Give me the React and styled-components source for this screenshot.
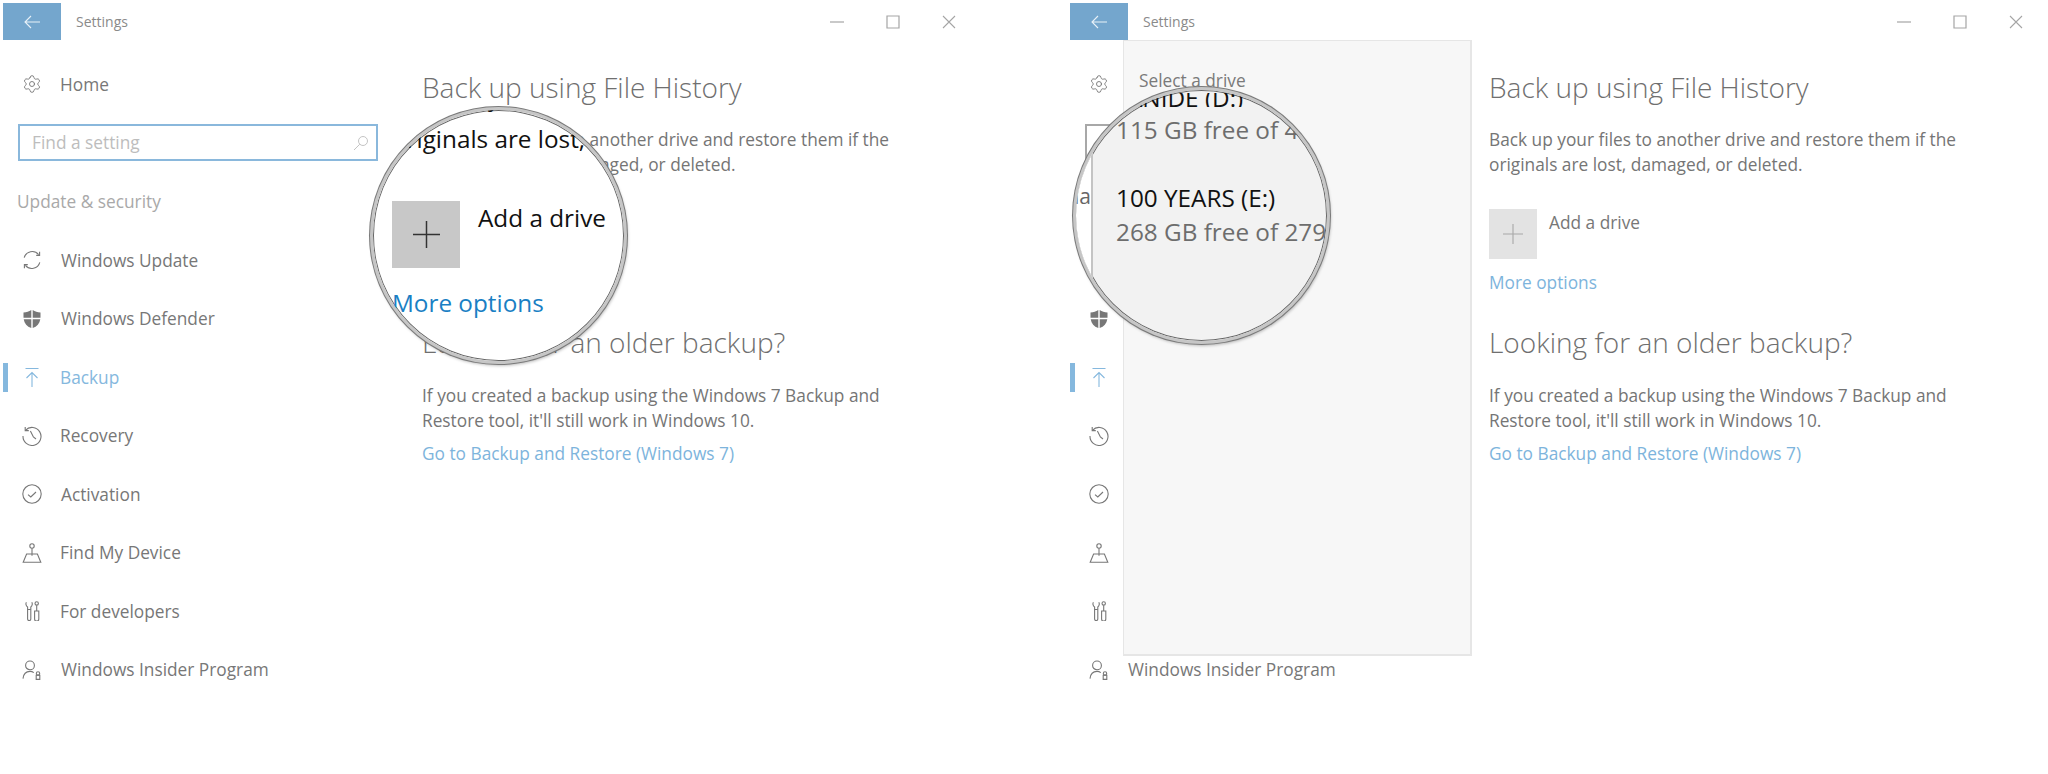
import React from 'react';
import styled, { createGlobalStyle } from 'styled-components';
import { Settings as Gear } from 'lucide-react';

const GlobalStyle = createGlobalStyle`
  html, body {
    margin: 0;
    padding: 0;
    background: #fff;
    font-family: "Open Sans", "Noto Sans", sans-serif;
  }
`;

const Page = styled.div`
  display: grid;
  grid-template-columns: 1067px 981px;
  width: 2048px;
  height: 774px;
  overflow: hidden;
`;

const Window = styled.div`
  position: relative;
  height: 774px;
`;

const TitleBar = styled.div`
  display: flex;
  align-items: center;
  height: 37px;
  padding: 3px 0 0 3px;
`;

const BackButton = styled.div`
  display: flex;
  align-items: center;
  justify-content: center;
  width: 58px;
  height: 37px;
  background: #74a6cd;
`;

const Title = styled.div`
  margin-left: 15px;
  font-size: 14px;
  color: #8a8a8a;
`;

const Controls = styled.div`
  display: flex;
  align-items: center;
  gap: 42px;
  margin-left: 702px;
`;

const Main = styled.div`
  display: grid;
  grid-template-columns: 422px 1fr;
`;

const Sidebar = styled.div`
  display: flex;
  flex-direction: column;
`;

const HomeRow = styled.div`
  display: flex;
  align-items: center;
  height: 40px;
  margin-top: 24px;
  padding-left: 22px;
  font-size: 17.3px;
  color: #777;
`;

const HomeLabel = styled.span`
  margin-left: 18px;
`;

const SearchBox = styled.div`
  display: flex;
  align-items: center;
  justify-content: space-between;
  box-sizing: border-box;
  width: 360px;
  height: 37px;
  margin: 20px 0 0 18px;
  padding: 0 7px 0 12px;
  border: 2px solid ${p => (p.$dim ? '#a8a8a8' : '#8ab8dc')};
  font-size: 17.3px;
  color: #bdbdbd;
`;

const SectionLabel = styled.div`
  margin: 29px 0 0 17px;
  height: 24px;
  line-height: 24px;
  font-size: 17.3px;
  color: #a9a9a9;
`;

const NavList = styled.div`
  display: flex;
  flex-direction: column;
  margin-top: 17px;
`;

const NavRow = styled.div`
  display: flex;
  align-items: center;
  height: 58.5px;
  padding-left: 3px;
  font-size: 17.3px;
  color: ${p => (p.$active ? '#85b8de' : '#777')};
`;

const Marker = styled.div`
  width: 5px;
  height: 29px;
  background: ${p => (p.$active ? '#85b8de' : 'transparent')};
`;

const NavIcon = styled.div`
  display: flex;
  width: 20px;
  height: 20px;
  margin-left: 14px;
`;

const NavLabel = styled.span`
  margin-left: ${p => p.$gap}px;
  white-space: nowrap;
`;

const Content = styled.div`
  padding-top: 29px;
`;

const Heading = styled.div`
  height: 36px;
  line-height: 36px;
  font-size: 28px;
  font-weight: 300;
  color: #6f6f6f;
  white-space: nowrap;
  margin-top: ${p => p.$top || 0}px;
`;

const Paragraph = styled.div`
  width: 500px;
  margin-top: ${p => p.$top}px;
  margin-bottom: 1px;
  font-size: 17.3px;
  line-height: 25px;
  color: #757575;
`;

const DriveRow = styled.div`
  display: flex;
  margin-top: 32px;
`;

const PlusBox = styled.div`
  display: flex;
  align-items: center;
  justify-content: center;
  width: 48px;
  height: 50px;
  background: #e3e3e3;
`;

const DriveLabel = styled.div`
  margin: 2px 0 0 12px;
  font-size: 17.3px;
  line-height: 24px;
  color: #777;
`;

const TextLink = styled.div`
  margin-top: ${p => p.$top}px;
  font-size: 17.3px;
  line-height: 24px;
  color: #7db4dc;
`;

const Flyout = styled.div`
  position: absolute;
  left: 56px;
  top: 40px;
  box-sizing: border-box;
  width: 349px;
  height: 616px;
  padding: 28px 0 0 15px;
  background: #f7f7f7;
  border: 2px solid #e6e6e6;
  border-width: 1px 2px 2px 1px;
  font-size: 17.3px;
  line-height: 24px;
  color: #7a7a7a;
`;

const Lens = styled.div`
  position: absolute;
  left: ${p => p.$left}px;
  top: ${p => p.$top}px;
  box-sizing: border-box;
  width: 257px;
  height: 257px;
  border-radius: 50%;
  overflow: hidden;
  background: ${p => p.$bg};
  border: 3px solid #c6c6c6;
  box-shadow: 0 0 0 1px #7a7a7a, inset 0 0 0 1px #666, 1px 2px 3px rgba(0, 0, 0, 0.25);
`;

const LensText = styled.div`
  height: 34px;
  line-height: 34px;
  font-size: 24.3px;
  color: #111;
  white-space: nowrap;
`;

const LensAddColumn = styled.div`
  display: flex;
  flex-direction: column;
  padding-left: 19px;
  margin-top: -30px;
`;

const LensOriginals = styled(LensText)`
  margin-top: 8px;
`;

const LensDriveRow = styled.div`
  display: flex;
  margin-top: 45px;
`;

const LensPlus = styled.div`
  display: flex;
  align-items: center;
  justify-content: center;
  flex: none;
  width: 68px;
  height: 67px;
  background: #c8c8c8;
`;

const LensDriveLabel = styled(LensText)`
  margin: 0 0 0 18px;
`;

const LensLink = styled(LensText)`
  margin-top: 18px;
  color: #1a7fc4;
`;

const DriveSplit = styled.div`
  display: flex;
  height: 100%;
`;

const Strip = styled.div`
  flex: none;
  box-sizing: border-box;
  width: 17px;
  padding-top: 89px;
  background: #fff;
  border-right: 2px solid #c4c4c4;
  overflow: hidden;
`;

const StripText = styled(LensText)`
  font-size: 21px;
  color: #666;
  direction: rtl;
`;

const DriveList = styled.div`
  flex: 1;
  min-width: 0;
  margin-top: 3px;
`;

const ClippedName = styled(LensText)`
  height: 14px;
  line-height: 9px;
  padding-left: 34px;
  overflow: hidden;
`;

const DriveFree = styled(LensText)`
  margin-top: ${p => p.$top}px;
  padding-left: 23px;
  color: #6d6d6d;
`;

const DriveName = styled(LensText)`
  margin-top: 34px;
  padding-left: 23px;
`;

const Line = props => (
  <svg width="20" height="20" viewBox="0 0 20 20" fill="none" stroke="currentColor" strokeWidth="1.1" {...props} />
);

const icons = {
  update: (
    <Line>
      <path d="M2.2 7.6A8.3 8.3 0 0 1 16.6 4.6M17.8 12.4A8.3 8.3 0 0 1 3.4 15.4" />
      <path d="M17.6 1.8v3.6h-3.4M2.4 18.2v-3.6h3.4" />
    </Line>
  ),
  defender: (
    <Line stroke="none" fill="currentColor">
      <path d="M9.3 1C7 2.4 4.6 3.2 1.5 3.4v5.4h7.8zM10.7 1c2.3 1.4 4.7 2.2 7.8 2.4v5.4h-7.8z" />
      <path d="M1.7 10.2h7.6V19C5 17.6 2.4 14.6 1.7 10.2zM18.3 10.2h-7.6V19c4.3-1.4 6.9-4.4 7.6-8.8z" />
    </Line>
  ),
  backup: (
    <Line>
      <path d="M3.5 1.5h13M10 20V5.5M4.5 11 10 5.5l5.5 5.5" />
    </Line>
  ),
  recovery: (
    <Line>
      <path d="M3.4 4.3A9 9 0 1 1 1 10" />
      <path d="M3.2 1v3.6h3.6M8.4 5l3 6 2.6 2" />
    </Line>
  ),
  activation: (
    <Line>
      <circle cx="10" cy="10" r="9.2" />
      <path d="M6 10.6l2.8 2.4 5.2-5" />
    </Line>
  ),
  device: (
    <Line>
      <circle cx="10" cy="3" r="2.2" />
      <path d="M10 5.2v7.6M1.2 19.2 4.6 11h10.8l3.4 8.2z" />
    </Line>
  ),
  developers: (
    <Line>
      <path d="M4.4 1.2C3.6 2.4 3.8 5 5.6 6v12a1.6 1.6 0 0 0 3.2 0V6c1.6-1 1.8-3.6 1-4.8" />
      <path d="M5.6 8.5h3.2M13 2.4a1.7 1.7 0 0 1 3.4 0c0 1-.7 1.7-1.7 1.7S13 3.4 13 2.4zM14.7 4.1V10M12.6 10h4.2v8a2.1 2.1 0 0 1-4.2 0z" />
    </Line>
  ),
  insider: (
    <Line>
      <circle cx="8" cy="5.4" r="4.4" />
      <path d="M1 18.6c.5-4.6 3.4-7.2 7-7.2 1.4 0 2.7.4 3.8 1.2" />
      <circle cx="16" cy="13.4" r="1.7" />
      <path d="M14.2 15.2h3.6v4.2h-3.6z" />
    </Line>
  ),
};

const navItems = [
  { key: 'update', label: 'Windows Update', gap: 19 },
  { key: 'defender', label: 'Windows Defender', gap: 19 },
  { key: 'backup', label: 'Backup', gap: 18, active: true },
  { key: 'recovery', label: 'Recovery', gap: 18 },
  { key: 'activation', label: 'Activation', gap: 19 },
  { key: 'device', label: 'Find My Device', gap: 18 },
  { key: 'developers', label: 'For developers', gap: 18 },
  { key: 'insider', label: 'Windows Insider Program', gap: 19 },
];

const Plus = ({ size, color, width }) => (
  <svg width={size} height={size} viewBox="0 0 20 20" stroke={color} strokeWidth={width}>
    <path d="M10 0v20M0 10h20" />
  </svg>
);

const SettingsWindow = ({ children, dimSearch }) => (
  <Window>
    <TitleBar>
      <BackButton>
        <svg width="16" height="14" viewBox="0 0 16 14" fill="none" stroke="#e8f1f8" strokeWidth="1.1">
          <path d="M16 7H1M7 1 1 7l6 6" />
        </svg>
      </BackButton>
      <Title>Settings</Title>
      <Controls>
        <svg width="14" height="14" viewBox="0 0 14 14" stroke="#a5a5a5" strokeWidth="1.2">
          <path d="M0 7h14" />
        </svg>
        <svg width="14" height="14" viewBox="0 0 14 14" fill="none" stroke="#a5a5a5" strokeWidth="1.2">
          <path d="M1 1h12v12H1z" />
        </svg>
        <svg width="14" height="14" viewBox="0 0 14 14" stroke="#a5a5a5" strokeWidth="1.1">
          <path d="M1 1l12 12M13 1 1 13" />
        </svg>
      </Controls>
    </TitleBar>
    <Main>
      <Sidebar>
        <HomeRow>
          <Gear size={20} strokeWidth={1.1} />
          <HomeLabel>Home</HomeLabel>
        </HomeRow>
        <SearchBox $dim={dimSearch}>
          Find a setting
          <svg width="16" height="16" viewBox="0 0 16 16" fill="none" stroke="#c4c4c4" strokeWidth="1">
            <circle cx="10" cy="6" r="4.5" />
            <path d="M6.8 9.2 1 15" />
          </svg>
        </SearchBox>
        <SectionLabel>Update &amp; security</SectionLabel>
        <NavList>
          {navItems.map(item => (
            <NavRow key={item.key} $active={item.active}>
              <Marker $active={item.active} />
              <NavIcon>{icons[item.key]}</NavIcon>
              <NavLabel $gap={item.gap}>{item.label}</NavLabel>
            </NavRow>
          ))}
        </NavList>
      </Sidebar>
      <Content>
        <Heading>Back up using File History</Heading>
        <Paragraph $top={22}>
          Back up your files to another drive and restore them if the originals are lost, damaged, or deleted.
        </Paragraph>
        <DriveRow>
          <PlusBox>
            <Plus size={20} color="#a8a8a8" width={1.1} />
          </PlusBox>
          <DriveLabel>Add a drive</DriveLabel>
        </DriveRow>
        <TextLink $top={12}>More options</TextLink>
        <Heading $top={29}>Looking for an older backup?</Heading>
        <Paragraph $top={23}>
          If you created a backup using the Windows 7 Backup and Restore tool, it'll still work in Windows 10.
        </Paragraph>
        <TextLink $top={9}>Go to Backup and Restore (Windows 7)</TextLink>
      </Content>
    </Main>
    {children}
  </Window>
);

const App = () => (
  <Page>
    <GlobalStyle />
    <SettingsWindow>
      <Lens $left={370} $top={107} $bg="#fff">
        <LensAddColumn>
          <LensText>Back up your files to</LensText>
          <LensOriginals>originals are lost, damaged, or deleted.</LensOriginals>
          <LensDriveRow>
            <LensPlus>
              <Plus size={27} color="#333" width={1.1} />
            </LensPlus>
            <LensDriveLabel>Add a drive</LensDriveLabel>
          </LensDriveRow>
          <LensLink>More options</LensLink>
        </LensAddColumn>
      </Lens>
    </SettingsWindow>
    <SettingsWindow dimSearch>
      <Flyout>Select a drive</Flyout>
      <Lens $left={6} $top={87} $bg="#f2f2f2">
        <DriveSplit>
          <Strip>
            <StripText>da</StripText>
          </Strip>
          <DriveList>
            <ClippedName>ANIDE (D:)</ClippedName>
            <DriveFree $top={6}>115 GB free of 465 GB</DriveFree>
            <DriveName>100 YEARS (E:)</DriveName>
            <DriveFree $top={0}>268 GB free of 279 GB</DriveFree>
          </DriveList>
        </DriveSplit>
      </Lens>
    </SettingsWindow>
  </Page>
);

export default App;
